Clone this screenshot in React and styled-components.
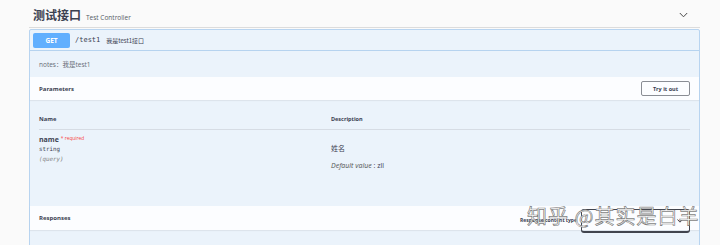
import React from "react";
import styled, { createGlobalStyle } from "styled-components";

const Global = createGlobalStyle`
  html, body { margin: 0; padding: 0; background: #fafafa; }
  body { font-family: "Open Sans", "Noto Sans CJK SC", sans-serif; color: #3b4151; }
  * { box-sizing: border-box; }
`;

const Page = styled.div`
  position: relative;
  padding: 0 20px 0 29px;
  width: 720px;
  height: 245px;
  overflow: hidden;
`;

const TagHeader = styled.div`
  height: 28px;
  border-bottom: 1px solid #dcdcdc;
  display: flex;
  align-items: center;
  justify-content: space-between;
  padding: 2px 12px 0 4px;
`;

const TagTitle = styled.div`
  display: flex;
  align-items: baseline;
  gap: 5px;
  font-family: "Noto Sans CJK SC", sans-serif;
  font-weight: 700;
  font-size: 12px;
  color: #3b4151;
`;

const TagDesc = styled.span`
  font-family: "Open Sans", sans-serif;
  font-weight: 400;
  font-size: 6.5px;
  color: #555a66;
`;

const Opblock = styled.div`
  margin-top: 1px;
  border: 1px solid #b8d4f0;
  border-radius: 2px;
  background: #ebf3fb;
`;

const Summary = styled.div`
  height: 21px;
  border-bottom: 1px solid #b6d3ef;
  display: flex;
  align-items: center;
  padding: 0 3px;
  gap: 5px;
`;

const Method = styled.span`
  width: 37px;
  height: 15px;
  border-radius: 2px;
  background: #61affe;
  color: #fff;
  font-weight: 700;
  font-size: 6.5px;
  display: flex;
  align-items: center;
  justify-content: center;
`;

const Path = styled.span`
  font-family: "DejaVu Sans Mono", monospace;
  font-size: 7px;
  color: #3b4151;
`;

const SummaryDesc = styled.span`
  font-family: "Noto Sans CJK SC", sans-serif;
  font-size: 6px;
  color: #3b4151;
  margin-left: 1px;
`;

const Notes = styled.div`
  height: 26px;
  display: flex;
  align-items: center;
  padding: 0 9px;
  font-family: "Open Sans", "Noto Sans CJK SC", sans-serif;
  font-size: 6.5px;
  color: #666b75;
`;

const SectionHeader = styled.div`
  height: ${(p) => p.$h}px;
  background: rgba(255, 255, 255, 0.82);
  box-shadow: 0 1px 1px rgba(0, 0, 0, 0.06);
  display: flex;
  align-items: center;
  justify-content: space-between;
  padding: 0 9px;
`;

const SectionTitle = styled.h4`
  margin: 0;
  font-size: 6px;
  font-weight: 700;
  color: #3b4151;
`;

const TryButton = styled.button`
  width: 49px;
  height: 15px;
  border: 1px solid #8a8d94;
  border-radius: 2px;
  background: transparent;
  font-family: "Open Sans", sans-serif;
  font-weight: 700;
  font-size: 5.5px;
  color: #3b4151;
  padding: 0;
`;

const ParamsBody = styled.div`
  height: 106px;
  padding: 13px 9px 0;
`;

const Grid = styled.div`
  display: grid;
  grid-template-columns: 292px 1fr;
`;

const Th = styled.div`
  font-size: ${(p) => p.$size}px;
  font-weight: 700;
  line-height: 12px;
  padding-bottom: 4px;
  border-bottom: 1px solid #d6dce4;
  color: #3b4151;
`;

const NameCell = styled.div`
  padding-top: 5px;
`;

const ParamName = styled.div`
  font-size: 7px;
  font-weight: 700;
  line-height: 10px;
  color: #3b4151;
  display: flex;
  align-items: flex-start;
  gap: 2px;
`;

const Required = styled.span`
  font-size: 4.8px;
  font-weight: 400;
  color: #f93e3e;
  line-height: 6px;
`;

const Mono = styled.div`
  font-family: "DejaVu Sans Mono", monospace;
  font-size: 5.8px;
  line-height: 9.5px;
  color: ${(p) => (p.$muted ? "#808080" : "#3b4151")};
  font-style: ${(p) => (p.$muted ? "italic" : "normal")};
`;

const DescCell = styled.div`
  padding-top: 13px;
`;

const DescText = styled.div`
  font-family: "Noto Sans CJK SC", sans-serif;
  font-size: 7px;
  line-height: 10px;
  color: #3b4151;
`;

const DefaultValue = styled.div`
  margin-top: 8px;
  font-size: 7px;
  line-height: 10px;
  color: #3b4151;
  i { color: #555; }
`;

const RightGroup = styled.div`
  display: flex;
  align-items: center;
  gap: 4px;
  align-self: flex-start;
  margin-top: 3px;
`;

const Label = styled.span`
  font-size: 5px;
  font-weight: 700;
  color: #3b4151;
  margin-top: -3px;
`;

const Select = styled.div`
  width: 109px;
  height: 24px;
  border: 1px solid #41444e;
  border-bottom-width: 2px;
  border-radius: 3px;
  display: flex;
  align-items: center;
  justify-content: flex-end;
  padding: 0 6px;
`;

const Spacer = styled.div`
  height: 40px;
`;

const Watermark = styled.div`
  position: absolute;
  left: 527px;
  top: 201px;
  font-family: "Noto Sans CJK SC", sans-serif;
  font-size: 20px;
  letter-spacing: 1px;
  color: #fff;
  -webkit-text-stroke: 0.7px rgba(90, 90, 90, 0.8);
  white-space: nowrap;
  pointer-events: none;
`;

const Chevron = () => (
  <svg width="9" height="6" viewBox="0 0 9 6">
    <polyline points="0.8,1 4.5,4.8 8.2,1" fill="none" stroke="#4a4a4a" strokeWidth="1" />
  </svg>
);

const SelectArrow = () => (
  <svg width="6" height="4" viewBox="0 0 6 4">
    <polyline points="0.5,0.5 3,3.2 5.5,0.5" fill="none" stroke="#41444e" strokeWidth="1" />
  </svg>
);

export default function App() {
  return (
    <>
      <Global />
      <Page>
        <TagHeader>
          <TagTitle>
            测试接口<TagDesc>Test Controller</TagDesc>
          </TagTitle>
          <Chevron />
        </TagHeader>
        <Opblock>
          <Summary>
            <Method>GET</Method>
            <Path>/test1</Path>
            <SummaryDesc>我是test1接口</SummaryDesc>
          </Summary>
          <Notes>notes：我是test1</Notes>
          <SectionHeader $h={23}>
            <SectionTitle>Parameters</SectionTitle>
            <TryButton>Try it out</TryButton>
          </SectionHeader>
          <ParamsBody>
            <Grid>
              <Th $size={5.8}>Name</Th>
              <Th $size={5.5}>Description</Th>
              <NameCell>
                <ParamName>
                  name<Required>* required</Required>
                </ParamName>
                <Mono>string</Mono>
                <Mono $muted>(query)</Mono>
              </NameCell>
              <DescCell>
                <DescText>姓名</DescText>
                <DefaultValue>
                  <i>Default value</i> : zll
                </DefaultValue>
              </DescCell>
            </Grid>
          </ParamsBody>
          <SectionHeader $h={24}>
            <SectionTitle>Responses</SectionTitle>
            <RightGroup>
              <Label>Response content type</Label>
              <Select>
                <SelectArrow />
              </Select>
            </RightGroup>
          </SectionHeader>
          <Spacer />
        </Opblock>
        <Watermark>知乎 @其实是白羊</Watermark>
      </Page>
    </>
  );
}
